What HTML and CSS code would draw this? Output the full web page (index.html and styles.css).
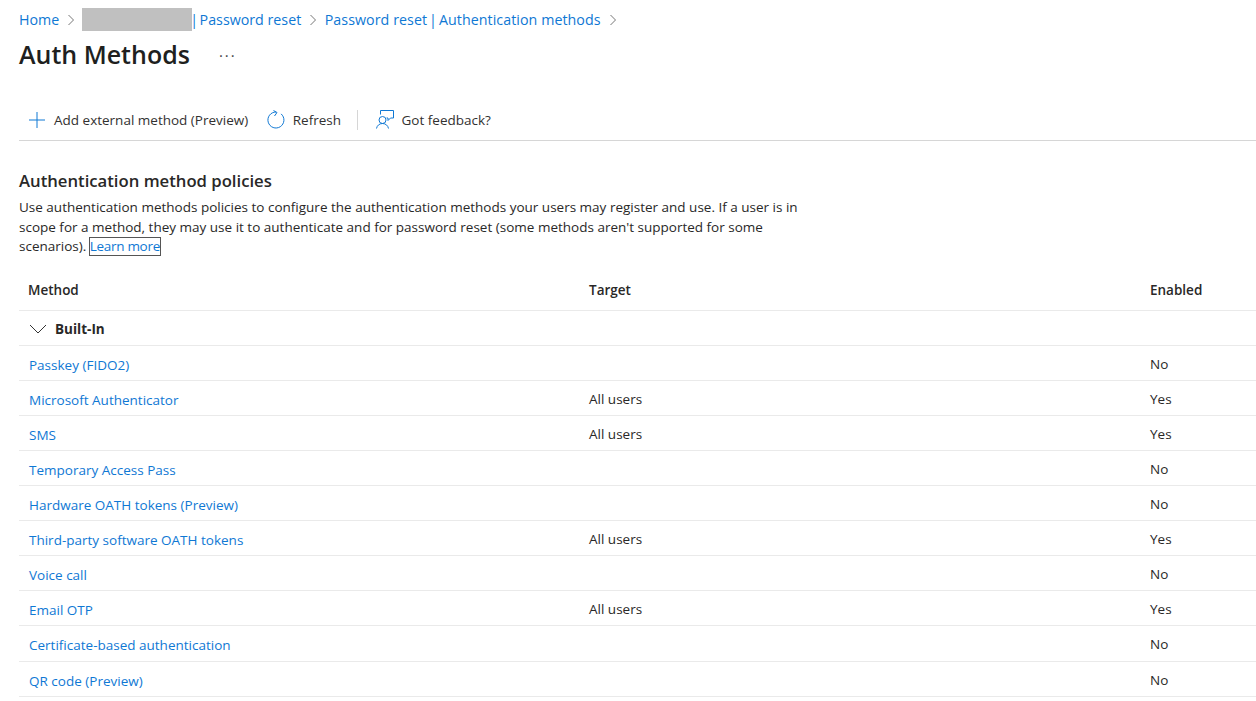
FILE: index.html
```html
<!DOCTYPE html>
<html lang="en">
<head>
<meta charset="utf-8">
<title>Auth Methods</title>
<link rel="stylesheet" href="styles.css">
</head>
<body>
<nav class="crumbs">
  <a href="#">Home</a>
  <svg class="chev" viewBox="0 0 8 12"><path d="M1.5 1l5 5-5 5"/></svg>
  <span class="redact"></span><a class="lead" href="#"><span class="bar-lead">|</span>Password reset</a>
  <svg class="chev" viewBox="0 0 8 12"><path d="M1.5 1l5 5-5 5"/></svg>
  <a class="wide" href="#">Password reset<span class="bar">|</span>Authentication methods</a>
  <svg class="chev" viewBox="0 0 8 12"><path d="M1.5 1l5 5-5 5"/></svg>
</nav>
<header class="title">
  <h1>Auth Methods</h1>
  <span class="more">···</span>
</header>
<div class="toolbar">
  <button class="tool tool-add">
    <svg class="ico" viewBox="0 0 18 18"><path d="M9 1v16M1 9h16"/></svg>
    Add external method (Preview)
  </button>
  <button class="tool tool-refresh">
    <svg class="ico" viewBox="0 0 18 18"><path d="M14.100 2.900A8 8 0 1 1 9 1"/><path d="M6.500 -.5L10 1.500L7.500 5"/></svg>
    Refresh
  </button>
  <span class="sep"></span>
  <button class="tool tool-fb">
    <svg class="ico" viewBox="0 0 18 18"><circle cx="6.500" cy="9" r="3.500"/><path d="M.5 17.500C1 14.500 3.500 12.500 6.500 12.500S12 14.500 12.500 17.500"/><path d="M4.500 3.500V-.5H17.500V7H14.500L12 9.500V7H10.500"/></svg>
    Got feedback?
  </button>
</div>
<section class="intro">
  <h2>Authentication method policies</h2>
  <p>Use authentication methods policies to configure the authentication methods your users may register and use. If a user is in scope for a method, they may use it to authenticate and for password reset (some methods aren't supported for some scenarios). <a class="focus" href="#">Learn more</a></p>
</section>
<div class="table">
  <div class="row head"><span>Method</span><span>Target</span><span>Enabled</span></div>
  <div class="row group"><span class="group-label"><svg class="caret" viewBox="0 0 18 10"><path d="M1 1l8 8 8-8"/></svg>Built-In</span></div>
  <div class="row"><a href="#">Passkey (FIDO2)</a><span></span><span>No</span></div>
  <div class="row"><a href="#">Microsoft Authenticator</a><span>All users</span><span>Yes</span></div>
  <div class="row"><a href="#">SMS</a><span>All users</span><span>Yes</span></div>
  <div class="row"><a href="#">Temporary Access Pass</a><span></span><span>No</span></div>
  <div class="row"><a href="#">Hardware OATH tokens (Preview)</a><span></span><span>No</span></div>
  <div class="row"><a href="#">Third-party software OATH tokens</a><span>All users</span><span>Yes</span></div>
  <div class="row"><a href="#">Voice call</a><span></span><span>No</span></div>
  <div class="row"><a href="#">Email OTP</a><span>All users</span><span>Yes</span></div>
  <div class="row"><a href="#">Certificate-based authentication</a><span></span><span>No</span></div>
  <div class="row"><a href="#">QR code (Preview)</a><span></span><span>No</span></div>
</div>
</body>
</html>
```
FILE: styles.css
```css
* { box-sizing: border-box; }
html, body { height: 100%; }
body {
  margin: 0;
  padding: 0 0 0 19px;
  overflow: hidden;
  background: #fff;
  color: #292827;
  font-family: "Open Sans", "Noto Sans", "Liberation Sans", sans-serif;
  font-size: 13.5px;
}
a { color: #0f78d4; text-decoration: none; }
.crumbs {
  display: flex;
  align-items: center;
  height: 39px;
  font-size: 14.25px;
}
.chev { width: 8px; height: 12px; margin: 0 8px; fill: none; stroke: #777; stroke-width: 1; }
.redact { width: 110px; height: 23px; margin-left: -1px; background: #c0c0c0; }
.lead { margin-left: -2px; }
.bar-lead { margin-right: 1.5px; }
.wide { margin-left: -0.5px; letter-spacing: 0.05px; }
.bar { margin: 0 2px; }
.title { display: flex; align-items: center; height: 30px; }
h1 { margin: 0; font-size: 25px; font-weight: 600; color: #201f1e; }
.more { margin-left: 29px; padding-top: 2px; font-size: 15px; letter-spacing: 2px; color: #444; }
.toolbar {
  display: flex;
  align-items: center;
  height: 40px;
  margin-top: 32px;
  border-bottom: 1px solid #d6d6d6;
  padding-left: 9px;
  padding-bottom: 1px;
}
.tool {
  display: flex;
  align-items: center;
  padding: 0;
  border: 0;
  background: none;
  font: inherit;
  color: #323130;
}
.ico { width: 18px; height: 18px; margin-right: 8px; overflow: visible; fill: none; stroke: #0f78d4; stroke-width: 1; flex: none; }
.tool-refresh { margin-left: 18.5px; }
.sep { width: 1px; height: 20px; margin: 0 18px 0 15.5px; background: #d6d6d6; }
.intro { margin-top: 29px; width: 790px; }
h2 { margin: 0 0 6px; font-size: 16.7px; line-height: 22px; font-weight: 600; color: #292827; }
.intro p { margin: 0; line-height: 19.5px; }
.focus { display: inline-block; line-height: 17px; outline: 1px solid #555; outline-offset: 0; letter-spacing: -0.3px; }
.table { margin-top: 15px; }
.row {
  display: grid;
  grid-template-columns: 560px 561px 1fr;
  align-items: center;
  height: 35.08px;
  padding: 2px 0 0 10px;
  border-bottom: 1px solid #eaeaea;
}
.row > a { padding-top: 2px; }
.row.head { height: 39px; padding: 0 0 2px 9px; grid-template-columns: 561px 561px 1fr; font-weight: 600; }
.row.group { height: 35.3px; font-weight: 700; }
.group-label { display: flex; align-items: center; grid-column: 1 / -1; }
.caret { width: 18px; height: 10px; margin-right: 8px; fill: none; stroke: #333; stroke-width: 1; }
```
